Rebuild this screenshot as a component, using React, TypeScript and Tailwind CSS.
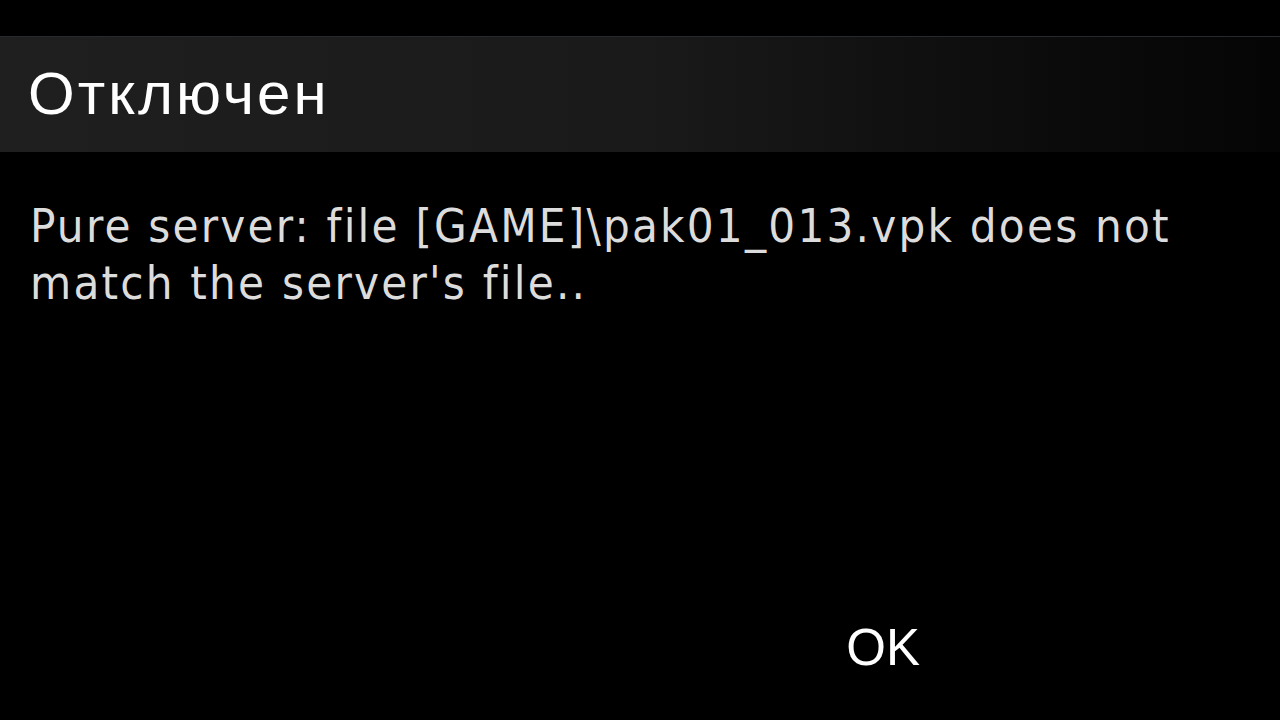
import React from 'react'

function App() {
  return (
    <div className="w-[1280px] h-[720px] bg-black flex flex-col overflow-hidden">
      <div className="h-[36px]" />
      {/* Header */}
      <header className="h-[116px] flex items-center pl-[28px] bg-gradient-to-r from-[#1f1f1f] via-[#1a1a1a] to-[#050505] border-t border-[#262a2e]">
        <h1 className="text-[60px] leading-none text-white font-['Liberation_Sans',Arial,sans-serif] tracking-[3px] mt-[-2px]">
          Отключен
        </h1>
      </header>
      {/* Message */}
      <div className="flex-1 flex flex-col px-[30px] pt-[45px]">
        <p className="text-[#dcdcdc] text-[47px] leading-[57px] tracking-[2.2px] font-['DejaVu_Sans_Condensed','DejaVu_Sans',sans-serif] max-w-[1200px]">
          Pure server: file [GAME]\pak01_013.vpk does not match the server's file..
        </p>
        <div className="mt-auto mb-[47px] flex justify-end pr-[330px]">
          <button className="text-white text-[51px] leading-none font-['Liberation_Sans',Arial,sans-serif]">
            OK
          </button>
        </div>
      </div>
    </div>
  )
}

export default App
